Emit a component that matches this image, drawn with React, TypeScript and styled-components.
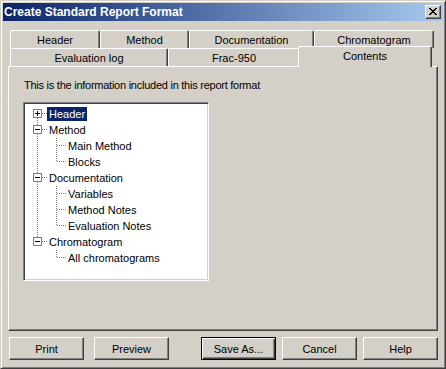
import React from 'react'
import styled, { createGlobalStyle } from 'styled-components'

const FACE = '#d4d0c8'
const SHADOW = '#808080'
const DARK = '#404040'

const GlobalStyle = createGlobalStyle`
  html, body {
    margin: 0;
    padding: 0;
    background: ${FACE};
  }
  * {
    box-sizing: border-box;
  }
`

const Window = styled.div`
  width: 446px;
  height: 369px;
  display: flex;
  flex-direction: column;
  background: ${FACE};
  border: 1px solid;
  border-color: ${FACE} ${DARK} ${DARK} ${FACE};
  box-shadow: inset 1px 1px #fff, inset -1px -1px ${SHADOW};
  padding: 2px;
  font-family: 'Liberation Sans', Arial, sans-serif;
  font-size: 11px;
  color: #000;
`

const TitleBar = styled.div`
  height: 18px;
  flex: none;
  display: flex;
  align-items: center;
  justify-content: space-between;
  padding: 0 2px 0 1px;
  background: linear-gradient(to right, #0a246a, #a6caf0);
`

const Title = styled.span`
  color: #fff;
  font-weight: bold;
  font-size: 12px;
  white-space: nowrap;
`

const CloseButton = styled.div`
  width: 16px;
  height: 14px;
  display: flex;
  align-items: center;
  justify-content: center;
  background: ${FACE};
  border: 1px solid;
  border-color: #fff ${DARK} ${DARK} #fff;
  box-shadow: inset -1px -1px ${SHADOW};
  margin-top: -1px;
`

const Body = styled.div`
  flex: 1;
  display: flex;
  flex-direction: column;
  padding: 9px 5px 6px;
`

const TabStrip = styled.div`
  display: flex;
  flex-direction: column;
  padding-left: 2px;
`

const TabRow = styled.div`
  display: flex;
  height: 18px;
`

const Tab = styled.div<{ $w: number; $selected?: boolean }>`
  width: ${p => p.$w}px;
  flex: none;
  height: ${p => (p.$selected ? 21 : 18)}px;
  margin: ${p => (p.$selected ? '-2px -2px 0' : '0')};
  padding-top: 2px;
  line-height: 14px;
  text-align: center;
  white-space: nowrap;
  background: ${FACE};
  border-top: 1px solid #fff;
  border-left: 1px solid #fff;
  border-right: 1px solid ${DARK};
  border-radius: 2px 2px 0 0;
  box-shadow: inset -1px 0 ${SHADOW};
  position: ${p => (p.$selected ? 'relative' : 'static')};
  z-index: ${p => (p.$selected ? 1 : 0)};
`

const Panel = styled.div`
  flex: 1;
  border: 1px solid;
  border-color: #fff ${DARK} ${DARK} #fff;
  box-shadow: inset -1px -1px ${SHADOW};
  padding: 12px 14px 0;
`

const Intro = styled.div`
  line-height: 13px;
  padding-left: 1px;
  margin-bottom: 10px;
  letter-spacing: -0.25px;
`

const TreeBox = styled.div`
  width: 186px;
  height: 179px;
  background: #fff;
  border: 1px solid;
  border-color: ${SHADOW} #fff #fff ${SHADOW};
  box-shadow: inset 1px 1px ${DARK}, inset -1px -1px ${FACE};
  padding: 3px 0 0 4px;
`

const TreeRow = styled.div`
  display: flex;
  align-items: center;
  height: 16px;
`

const TreeLabel = styled.span<{ $selected?: boolean }>`
  height: 14px;
  line-height: 14px;
  padding: 0 2px;
  white-space: nowrap;
  background: ${p => (p.$selected ? '#0a246a' : 'transparent')};
  color: ${p => (p.$selected ? '#fff' : '#000')};
`

const ButtonBar = styled.div`
  display: flex;
  justify-content: space-between;
  margin-top: 6px;
  padding-left: 1px;
`

const ButtonGroup = styled.div<{ $gap: number }>`
  display: flex;
  gap: ${p => p.$gap}px;
`

const Button = styled.div<{ $default?: boolean }>`
  width: 75px;
  height: 23px;
  display: flex;
  align-items: center;
  justify-content: center;
  background: ${FACE};
  border: 1px solid;
  border-color: ${p => (p.$default ? '#000' : `#fff ${DARK} ${DARK} #fff`)};
  box-shadow: ${p =>
    p.$default
      ? `inset 1px 1px #fff, inset -1px -1px ${DARK}, inset -2px -2px ${SHADOW}`
      : `inset -1px -1px ${SHADOW}`};
`

const dots = { stroke: SHADOW, strokeWidth: 1, strokeDasharray: '1 1' }

function Connector({
  up,
  down,
  branch = true,
  box,
}: {
  up?: boolean
  down?: boolean
  branch?: boolean
  box?: 'plus' | 'minus'
}) {
  return (
    <svg width="19" height="16" style={{ flex: 'none', display: 'block' }}>
      {up && <line x1="9.5" y1="0" x2="9.5" y2="8" {...dots} />}
      {down && <line x1="9.5" y1="8" x2="9.5" y2="16" {...dots} />}
      {branch && <line x1="10" y1="7.5" x2="19" y2="7.5" {...dots} />}
      {box && (
        <g shapeRendering="crispEdges">
          <rect x="5.5" y="3.5" width="8" height="8" fill="#fff" stroke={SHADOW} />
          <line x1="7" y1="7.5" x2="12" y2="7.5" stroke="#000" />
          {box === 'plus' && <line x1="9.5" y1="5" x2="9.5" y2="10" stroke="#000" />}
        </g>
      )}
    </svg>
  )
}

type Node = { label: string; expanded: boolean; selected?: boolean; children: string[] }

const tree: Node[] = [
  { label: 'Header', expanded: false, selected: true, children: [] },
  { label: 'Method', expanded: true, children: ['Main Method', 'Blocks'] },
  { label: 'Documentation', expanded: true, children: ['Variables', 'Method Notes', 'Evaluation Notes'] },
  { label: 'Chromatogram', expanded: true, children: ['All chromatograms'] },
]

function Tree() {
  return (
    <TreeBox>
      {tree.map((node, i) => {
        const first = i === 0
        const last = i === tree.length - 1
        return (
          <React.Fragment key={node.label}>
            <TreeRow>
              <Connector up={!first} down={!last} box={node.expanded ? 'minus' : 'plus'} />
              <TreeLabel $selected={node.selected}>{node.label}</TreeLabel>
            </TreeRow>
            {node.expanded &&
              node.children.map((child, j) => (
                <TreeRow key={child}>
                  {last ? <svg width="19" height="16" style={{ flex: 'none' }} /> : <Connector up down branch={false} />}
                  <Connector up down={j < node.children.length - 1} />
                  <TreeLabel>{child}</TreeLabel>
                </TreeRow>
              ))}
          </React.Fragment>
        )
      })}
    </TreeBox>
  )
}

export default function App() {
  return (
    <>
      <GlobalStyle />
      <Window>
        <TitleBar>
          <Title>Create Standard Report Format</Title>
          <CloseButton>
            <svg width="8" height="7" viewBox="0 0 8 7" shapeRendering="crispEdges">
              <path d="M0 0h2v1h1v1h2V1h1V0h2v1h-1v1h-1v1h-1v1h1v1h1v1h1v1H6V6H5V5H3v1H2v1H0V6h1V5h1V4h1V3H2V2H1V1H0z" fill="#000" />
            </svg>
          </CloseButton>
        </TitleBar>
        <Body>
          <TabStrip>
            <TabRow>
              <Tab $w={90}>Header</Tab>
              <Tab $w={89}>Method</Tab>
              <Tab $w={125}>Documentation</Tab>
              <Tab $w={120}>Chromatogram</Tab>
            </TabRow>
            <TabRow>
              <Tab $w={158}>Evaluation log</Tab>
              <Tab $w={132}>Frac-950</Tab>
              <Tab $w={134} $selected>
                Contents
              </Tab>
            </TabRow>
          </TabStrip>
          <Panel>
            <Intro>This is the information included in this report format</Intro>
            <Tree />
          </Panel>
          <ButtonBar>
            <ButtonGroup $gap={10}>
              <Button>Print</Button>
              <Button>Preview</Button>
            </ButtonGroup>
            <ButtonGroup $gap={6}>
              <Button $default>Save As...</Button>
              <Button>Cancel</Button>
              <Button>Help</Button>
            </ButtonGroup>
          </ButtonBar>
        </Body>
      </Window>
    </>
  )
}
